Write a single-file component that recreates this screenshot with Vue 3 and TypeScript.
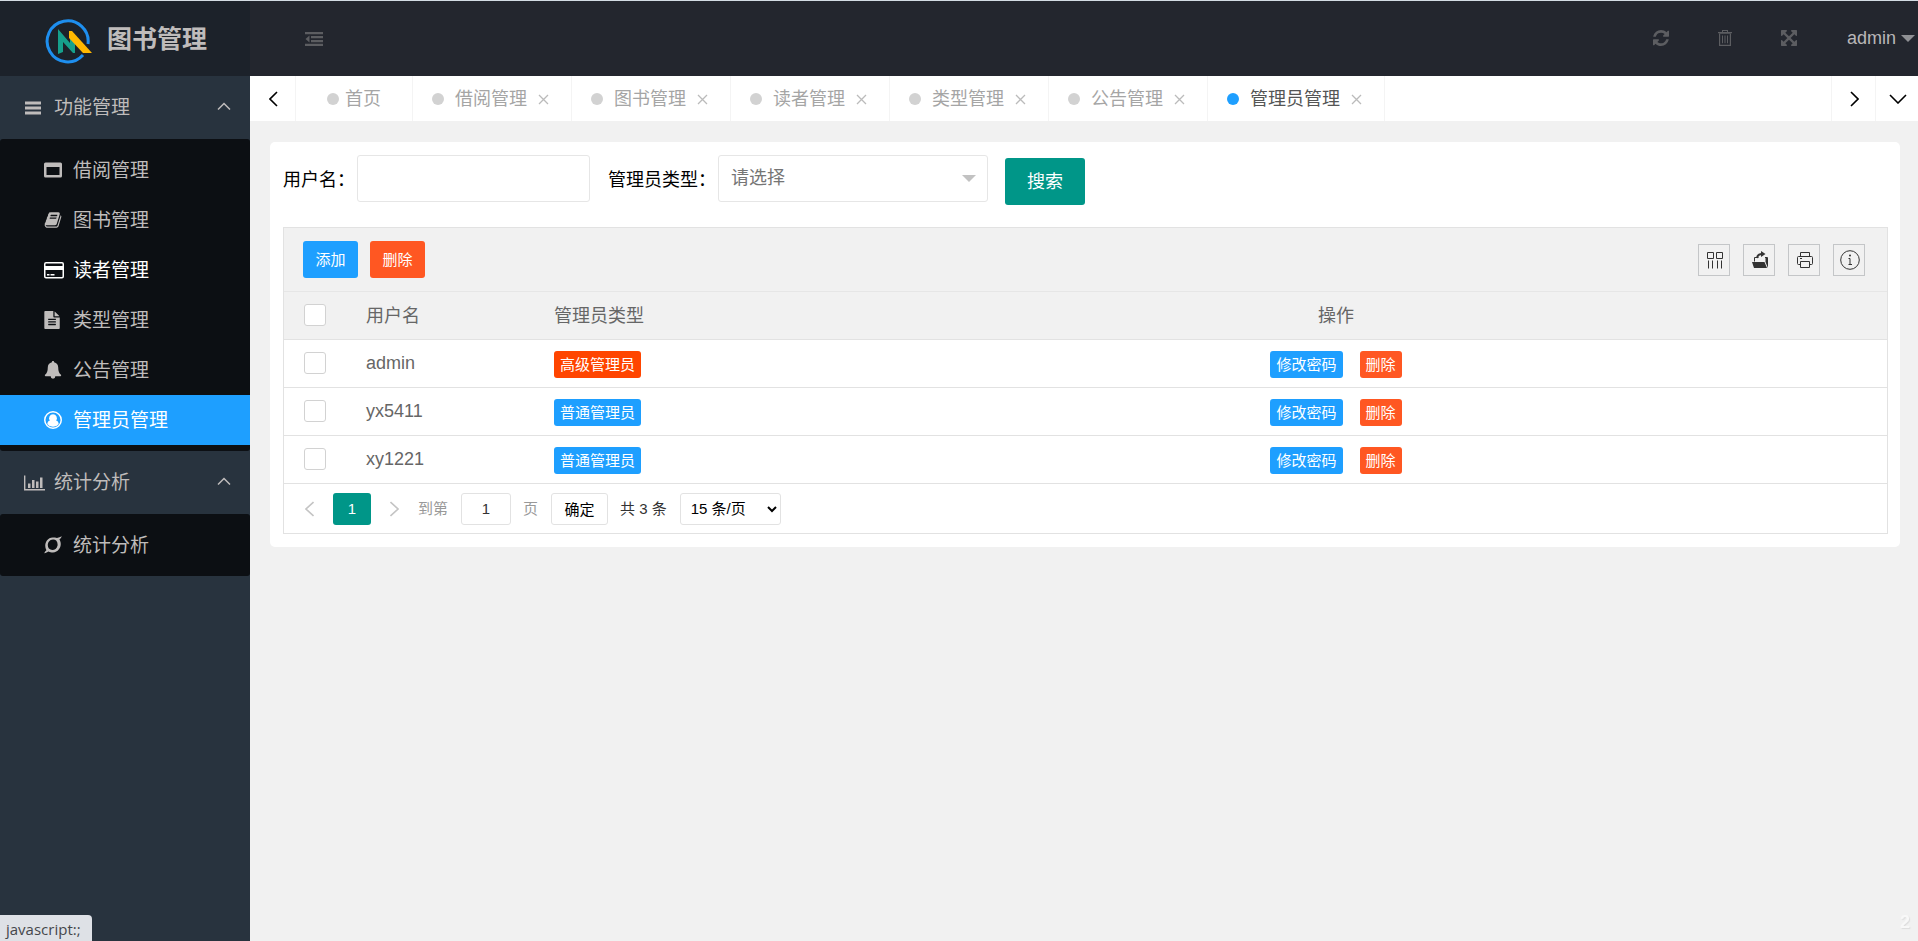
<script setup lang="ts">
import { ref } from 'vue'

interface Glyph { box: string; d: string }
interface MenuItem { label: string; icon: string; active?: boolean; hover?: boolean }
interface MenuGroup { label: string; icon: string; items: MenuItem[] }
interface Admin { name: string; type: string; senior: boolean }

const glyphs: Record<string, Glyph> = {
  bars: { box: '0 0 18 18', d: 'M1 2.500h16v3H1zM1 7.500h16v3H1zM1 12.500h16v3H1z' },
  window: { box: '0 0 18 18', d: 'M1.500 1.500h15a1.500 1.500 0 0 1 1.500 1.500v12a1.500 1.500 0 0 1-1.500 1.500h-15A1.500 1.500 0 0 1 0 15V3a1.500 1.500 0 0 1 1.500-1.500zM2.500 6v8h13V6z' },
  book: { box: '0 0 1792 1792', d: 'M1703 478q40 57 18 129l-275 906q-19 64-76.500 107.500t-122.500 43.500h-923q-77 0-148.500-53.500t-99.500-131.500q-24-67-2-127 0-4 3-27t4-37q1-8-3-21.500t-3-19.500q2-11 8-21t16.500-23.500 16.500-23.500q23-38 45-91.500t30-91.500q3-10 .5-30t-.5-28q3-11 17-28t17-23q21-36 42-92t25-90q1-9-2.500-32t.5-28q4-13 22-30.500t22-22.500q19-26 42.500-84.500t27.500-96.500q1-8-3-25.500t-2-26.500q2-8 9-18t18-23 17-21q8-12 16.500-30.500t15-35 16-36 19.500-32 26.500-23.500 36-11.500 47.500 5.500l-1 3q38-9 51-9h761q74 0 114 56t18 130l-274 906q-36 119-71.500 153.500t-128.500 34.500h-869q-27 0-38 15-11 16-1 43 24 70 144 70h923q29 0 56-15.500t35-41.500l300-987q7-22 5-57 38 15 59 43zm-1064 2q-4 13 2 22.500t20 9.500h608q13 0 25.500-9.500t16.500-22.500l21-64q4-13-2-22.500t-20-9.500h-608q-13 0-25.500 9.500t-16.500 22.500zm-83 256q-4 13 2 22.500t20 9.500h608q13 0 25.500-9.500t16.500-22.500l21-64q4-13-2-22.500t-20-9.500h-608q-13 0-25.500 9.500t-16.500 22.500z' },
  credit: { box: '0 0 20 18', d: 'M2 1h16a2 2 0 0 1 2 2v12.500a2 2 0 0 1-2 2H2a2 2 0 0 1-2-2V3a2 2 0 0 1 2-2zM1.500 3v2h17V3a.5.5 0 0 0-.5-.5H2a.5.5 0 0 0-.5.5zM1.500 9v6.500c0 .3.200.5.500.5h16c.3 0 .5-.2.500-.5V9zM3 13h2.500v1.500H3zM6.500 13h4v1.500h-4z' },
  file: { box: '96 0 1792 1792', d: 'M1596 476q14 14 28 36h-472v-472q22 14 36 28zm-476 164h544v1056q0 40-28 68t-68 28h-1344q-40 0-68-28t-28-68v-1600q0-40 28-68t68-28h800v544q0 40 28 68t68 28zm160 736v-64q0-14-9-23t-23-9h-704q-14 0-23 9t-9 23v64q0 14 9 23t23 9h704q14 0 23-9t9-23zm0-256v-64q0-14-9-23t-23-9h-704q-14 0-23 9t-9 23v64q0 14 9 23t23 9h704q14 0 23-9t9-23zm0-256v-64q0-14-9-23t-23-9h-704q-14 0-23 9t-9 23v64q0 14 9 23t23 9h704q14 0 23-9t9-23z' },
  bell: { box: '0 0 18 18', d: 'M9 0c.7 0 1.200.5 1.100 1.300 2.500.5 4.100 2.500 4.100 5 0 4 .9 6.200 3 7.700 0 .8-.5 1.300-1.200 1.300h-4.700A2.400 2.400 0 0 1 9 17.800a2.400 2.400 0 0 1-2.300-2.500H2c-.7 0-1.200-.5-1.200-1.300 2.100-1.500 3-3.700 3-7.700 0-2.500 1.600-4.500 4.100-5C7.800.5 8.300 0 9 0z' },
  user: { box: '0 0 18 18', d: 'M9 0a9 9 0 1 1 0 18A9 9 0 0 1 9 0zM9 1.500a7.500 7.500 0 1 0 0 15 7.500 7.500 0 0 0 0-15zM9 3.200a3.900 3.900 0 0 1 3 6.400c1.500.2 2.400 1.500 2.700 3.300A7 7 0 0 1 9 15.800a7 7 0 0 1-5.700-2.900c.3-1.800 1.200-3.100 2.700-3.300A3.900 3.900 0 0 1 9 3.200z' },
  chart: { box: '0 0 21 18', d: 'M0 1.500h1.400v13.600H21v1.400H0zM4 9.500h2.500V14H4zM8 6h2.500v8H8zM12 7.500h2.500V14H12zM16 3.500h2.500V14H16z' },
  ring: { box: '0 0 18 18', d: 'M17.800.3c-.6 1.500-1.400 2.500-2.400 3.200 3.200 4.600.6 12.600-6.400 12.900-2 0-3.200-.3-4.500-1-1.200.8-2.500 1.500-4.300 1.900.6-1.300 1.300-2.300 2.200-3C-.4 9.500 1.900 1.900 8.700 1.500c1.700 0 3 .1 4.300.4 1.700-.3 3.200-.8 4.800-1.600zM9 3.600c-5.200.3-6.300 6.200-4.100 9 2.800 2.700 7.800 1.300 8.600-2.900C14.100 6.200 12.200 3.500 9 3.600z' },
  outdent: { box: '0 0 18 14', d: 'M0 0h18v2.200H0zM6 4h12v2.200H6zM6 8h12v2.200H6zM0 11.800h18V14H0zM4.500 3.500v7L.5 7z' },
  refresh: { box: '128 128 1536 1536', d: 'M1639 1056q0 5-1 7-64 268-268 434.500t-478 166.500q-146 0-282.500-55t-243.500-157l-129 129q-19 19-45 19t-45-19-19-45v-448q0-26 19-45t45-19h448q26 0 45 19t19 45-19 45l-137 137q71 66 161 102t187 36q134 0 250-65t186-179q11-17 53-117 8-23 30-23h192q13 0 22.500 9.500t9.500 22.500zm25-800v448q0 26-19 45t-45 19h-448q-26 0-45-19t-19-45 19-45l138-138q-148-137-349-137-134 0-250 65t-186 179q-11 17-53 117-8 23-30 23h-199q-13 0-22.500-9.500t-9.500-22.500v-7q65-268 270-434.500t480-166.500q146 0 284 55.500t245 156.500l130-129q19-19 45-19t45 19 19 45z' },
  trash: { box: '0 0 16 16', d: 'M5 0h6v2h4v1.300H1V2h4zM6 1v1h4V1zM2 3h12v13H2zM3.200 4v10.800h9.600V4zM5 5.500h1v7.800H5zM7.500 5.500h1v7.800h-1zM10 5.500h1v7.800h-1z' },
  expand: { box: '128 128 1536 1536', d: 'M1411 541l-355 355 355 355 144-144q29-31 70-14 39 17 39 59v448q0 26-19 45t-45 19h-448q-42 0-59-40-17-39 14-69l144-144-355-355-355 355 144 144q31 30 14 69-17 40-59 40h-448q-26 0-45-19t-19-45v-448q0-42 40-59 39-17 69 14l144 144 355-355-355-355-144 144q-19 19-45 19-12 0-24-5-40-17-40-59v-448q0-26 19-45t45-19h448q42 0 59 40 17 39-14 69l-144 144 355 355 355-355-144-144q-31-30-14-69 17-40 59-40h448q26 0 45 19t19 45v448q0 42-39 59-13 5-25 5-26 0-45-19z' },
}

const headerTools = [
  { icon: 'refresh', title: '刷新' },
  { icon: 'trash', title: '清理' },
  { icon: 'expand', title: '全屏' },
]

const groups: MenuGroup[] = [
  {
    label: '功能管理',
    icon: 'bars',
    items: [
      { label: '借阅管理', icon: 'window' },
      { label: '图书管理', icon: 'book' },
      { label: '读者管理', icon: 'credit', hover: true },
      { label: '类型管理', icon: 'file' },
      { label: '公告管理', icon: 'bell' },
      { label: '管理员管理', icon: 'user', active: true },
    ],
  },
  { label: '统计分析', icon: 'chart', items: [{ label: '统计分析', icon: 'ring' }] },
]

const tabs = ['借阅管理', '图书管理', '读者管理', '类型管理', '公告管理', '管理员管理']
const currentTab = ref('管理员管理')

const admins: Admin[] = [
  { name: 'admin', type: '高级管理员', senior: true },
  { name: 'yx5411', type: '普通管理员', senior: false },
  { name: 'xy1221', type: '普通管理员', senior: false },
]
const userName = ref('')
const pageNo = ref('1')
</script>

<template>
  <div class="app">
    <aside class="side">
      <h1 class="logo">
        <svg class="logo-mark" viewBox="0 0 48 46" aria-hidden="true">
          <path d="M43 26A20.500 20.500 0 1 0 38 37" fill="none" stroke="#1e8fef" stroke-width="3" />
          <path d="M13 11l12 14v-5l5 5v10h-2L18 24v10l-5 2z" fill="#16a08c" />
          <path d="M24 13h3l20 22h-9L24 20z" fill="#ffb800" />
        </svg>
        <span>图书管理</span>
      </h1>
      <nav>
        <section v-for="g in groups" :key="g.label">
          <button class="group" type="button">
            <svg class="group-icon" :class="g.icon" :viewBox="glyphs[g.icon].box"><path :d="glyphs[g.icon].d" fill-rule="evenodd" /></svg>
            <span>{{ g.label }}</span>
            <svg class="fold" viewBox="0 0 14 8"><path d="M1 7.500l6-6 6 6" /></svg>
          </button>
          <ul class="items">
            <li v-for="i in g.items" :key="i.label">
              <a href="#" class="item" :class="{ active: i.active, hover: i.hover }">
                <svg class="item-icon" :class="i.icon" :viewBox="glyphs[i.icon].box"><path :d="glyphs[i.icon].d" fill-rule="evenodd" /></svg>
                <span>{{ i.label }}</span>
              </a>
            </li>
          </ul>
        </section>
      </nav>
    </aside>

    <div class="main">
      <header class="top">
        <button class="toggle" type="button" aria-label="收起菜单">
          <svg :viewBox="glyphs.outdent.box"><path :d="glyphs.outdent.d" /></svg>
        </button>
        <div class="tools">
          <button v-for="t in headerTools" :key="t.icon" class="tool" type="button" :aria-label="t.title">
            <svg :viewBox="glyphs[t.icon].box"><path :d="glyphs[t.icon].d" fill-rule="evenodd" /></svg>
          </button>
          <button class="account" type="button">admin<i class="caret"></i></button>
        </div>
      </header>

      <div class="tabbar">
        <button class="ctl left" type="button" aria-label="向左">
          <svg class="vert" viewBox="0 0 9 16"><path d="M8 1L1 8l7 7" /></svg>
        </button>
        <div class="tabs">
          <div class="tab home"><i class="dot"></i><a href="#">首页</a></div>
          <div v-for="t in tabs" :key="t" class="tab" :class="{ on: t === currentTab }">
            <i class="dot"></i>
            <a href="#" @click.prevent="currentTab = t">{{ t }}</a>
            <button class="close" type="button" aria-label="关闭"><svg viewBox="0 0 11 11"><path d="M1 1l9 9M10 1l-9 9" /></svg></button>
          </div>
        </div>
        <button class="ctl" type="button" aria-label="向右">
          <svg class="vert" viewBox="0 0 9 16"><path d="M1 1l7 7-7 7" /></svg>
        </button>
        <button class="ctl last" type="button" aria-label="更多">
          <svg class="horiz" viewBox="0 0 18 10"><path d="M1 1l8 8 8-8" /></svg>
        </button>
      </div>

      <main class="card">
        <form class="search" @submit.prevent>
          <label for="user">用户名：</label>
          <input id="user" v-model="userName" type="text">
          <label for="kind">管理员类型：</label>
          <div class="picker">
            <select id="kind">
              <option>请选择</option>
              <option>高级管理员</option>
              <option>普通管理员</option>
            </select>
          </div>
          <button class="go" type="submit">搜索</button>
        </form>

        <div class="grid">
          <div class="bar">
            <button class="act blue" type="button">添加</button>
            <button class="act red" type="button">删除</button>
            <div class="bar-tools">
              <button type="button" aria-label="筛选列">
                <svg viewBox="0 0 18 18"><path class="line" d="M1.500 1.500h6v6h-6zM10.500 1.500h6v6h-6zM2.500 9.500v8M6.500 9.500v8M11.500 9.500v8M15.500 9.500v8" /></svg>
              </button>
              <button type="button" aria-label="导出">
                <svg viewBox="0 0 18 18"><path d="M1 11h12.500l2.500 6H3zM14.500 7H17v10l-2.500-6z" /><path class="line" d="M3.500 10.500v-4h4M14 6.500h2.500v4" /><path class="line" d="M6 7c.5-3 2.500-4 5-4" stroke-width="2" /><path d="M10 0l4.500 3L10 6z" /></svg>
              </button>
              <button type="button" aria-label="打印">
                <svg viewBox="0 0 18 18"><path class="line" d="M4.500 5.500v-4h9v4M4.500 13.500h-2a1 1 0 0 1-1-1v-6a1 1 0 0 1 1-1h13a1 1 0 0 1 1 1v6a1 1 0 0 1-1 1h-2M4.500 10.500h9v6h-9zM4 7.500h2" /></svg>
              </button>
              <button type="button" aria-label="提示">
                <svg class="info" viewBox="0 0 20 20"><circle class="line" cx="10" cy="10" r="9.300" /><path class="line" d="M8.500 8.500H10v6M8.500 14.500h3.500" /><circle cx="10" cy="5.500" r="1" /></svg>
              </button>
            </div>
          </div>

          <table>
            <colgroup><col class="c1"><col class="c2"><col class="c3"><col></colgroup>
            <thead>
              <tr>
                <th><input type="checkbox" aria-label="全选"></th>
                <th>用户名</th>
                <th>管理员类型</th>
                <th class="mid">操作</th>
              </tr>
            </thead>
            <tbody>
              <tr v-for="a in admins" :key="a.name">
                <td><input type="checkbox" :aria-label="a.name"></td>
                <td>{{ a.name }}</td>
                <td><button class="mini" :class="a.senior ? 'orange' : 'blue'" type="button">{{ a.type }}</button></td>
                <td>
                  <div class="ops">
                    <button class="mini blue" type="button">修改密码</button>
                    <button class="mini red" type="button">删除</button>
                  </div>
                </td>
              </tr>
            </tbody>
          </table>

          <div class="pager">
            <button class="turn" type="button" aria-label="上一页"><svg viewBox="0 0 9 16"><path d="M8.500 1L1 8l7.500 7" /></svg></button>
            <button class="page" type="button">1</button>
            <button class="turn" type="button" aria-label="下一页"><svg viewBox="0 0 9 16"><path d="M.5 1L8 8l-7.500 7" /></svg></button>
            <label for="page">到第</label>
            <input id="page" v-model="pageNo" type="text">
            <span class="grey">页</span>
            <button class="ok" type="button">确定</button>
            <span class="total">共 3 条</span>
            <select aria-label="每页条数"><option>15 条/页</option><option>30 条/页</option></select>
          </div>
        </div>
      </main>
    </div>

    <div class="status">javascript:;</div>
    <div class="mark">2</div>
  </div>
</template>

<style>
body { background: #f1f1f1; }
</style>

<style scoped>
* { box-sizing: border-box; }
button, input, select { font: inherit; margin: 0; padding: 0; border: 0; background: none; color: inherit; border-radius: 0; }
button { cursor: pointer; }
a { color: inherit; text-decoration: none; }
svg { display: block; fill: currentColor; }
ul { list-style: none; margin: 0; padding: 0; }

.app {
  display: flex;
  min-height: 100vh;
  border-top: 1px solid #d3dce3;
  font-family: "Liberation Sans", "Noto Sans CJK SC", sans-serif;
  font-size: 18px;
  color: #000;
}

/* sidebar */
.side { flex: none; width: 250px; background: #28333e; color: #bfbcbb; font-size: 19px; }
.logo {
  display: flex; align-items: center; gap: 14px;
  height: 75px; margin: 0; padding-left: 45px;
  background: #1c222a; font-size: 25px; line-height: 36px; font-weight: 700;
}
.logo-mark { width: 48px; height: 46px; margin-top: 4px; }
.group { display: flex; align-items: center; width: 100%; height: 63px; padding: 0 19px 0 24px; text-align: left; }
.group span { flex: 1; padding-bottom: 4px; }
.group-icon { width: 18px; height: 18px; margin-right: 12px; }
.group-icon.chart { width: 21px; margin-right: 9px; }
.fold { width: 14px; height: 8px; margin-bottom: 4px; fill: none; stroke: currentColor; stroke-width: 1.500; }
.items { padding: 6px 0; background: #0c0f13; border-radius: 3px; }
.item { display: flex; align-items: center; gap: 11px; height: 50px; padding-left: 44px; }
.item span { padding-bottom: 4px; }
.item-icon { width: 18px; height: 18px; }
.item-icon.credit { width: 20px; margin-right: -2px; }
.item.hover { color: #fff; }
.item.active { background: #1e9fff; color: #fff; }

/* header */
.main { flex: 1; min-width: 0; }
.top { display: flex; align-items: center; justify-content: space-between; height: 75px; padding-left: 55px; background: #23262e; color: #5c5d61; }
.toggle svg { width: 18px; height: 14px; }
.tools { display: flex; align-items: center; }
.tool { width: 64px; height: 75px; padding-bottom: 2px; display: flex; align-items: center; justify-content: center; }
.tool svg { width: 16px; height: 16px; }
.account { display: flex; align-items: center; gap: 5px; margin-left: 26px; padding-right: 3px; color: #b9b6b8; }
.caret { border: 7px solid transparent; border-top-color: #8f9094; border-bottom-width: 0; }

/* tab strip */
.tabbar { display: flex; height: 45px; background: #fff; }
.ctl { flex: none; display: flex; align-items: center; justify-content: center; width: 44px; padding-left: 2px; border-left: 1px solid #f4f4f4; }
.ctl.left { width: 46px; border-left: 0; border-right: 1px solid #f4f4f4; }
.ctl.last { width: 43px; }
.ctl svg, .close svg, .turn svg { fill: none; stroke: currentColor; }
.ctl svg { stroke-width: 1.600; }
.vert { width: 9px; height: 16px; }
.horiz { width: 18px; height: 10px; }
.tabs { display: flex; flex: 1; min-width: 0; overflow: hidden; color: #a5a5a5; }
.tab { display: flex; align-items: center; gap: 11px; padding: 0 22px 0 19px; border-right: 1px solid #f4f4f4; white-space: nowrap; }
.tab.home { gap: 6px; padding: 0 31px; }
.tab.on { color: #555; }
.tab a { padding-bottom: 4px; }
.dot { width: 12px; height: 12px; border-radius: 50%; background: #d2d2d2; }
.on .dot { background: #1e9fff; }
.close { padding-top: 2px; color: #bbb; }
.close svg { width: 11px; height: 11px; stroke-width: 1.300; }

/* content card */
.card { margin: 21px 18px 0 20px; padding: 13px 12px 13px 13px; background: #fff; border-radius: 5px; }
.search { display: flex; align-items: flex-start; padding-bottom: 22px; }
.search label { line-height: 50px; }
.search input { width: 233px; height: 47px; margin: 0 18px 0 2px; padding: 0 13px; border: 1px solid #e6e6e6; border-radius: 3px; }
.picker { position: relative; width: 270px; margin-left: 2px; }
.picker select { width: 100%; height: 47px; padding: 0 12px 2px; border: 1px solid #e6e6e6; border-radius: 3px; appearance: none; background: #fff; color: #757575; }
.picker::after { content: ""; position: absolute; right: 12px; top: 20px; border: 7px solid transparent; border-top-color: #c2c2c2; border-bottom-width: 0; pointer-events: none; }
.go { width: 80px; height: 47px; margin: 3px 0 0 17px; padding-bottom: 4px; border-radius: 3px; background: #009688; color: #fff; }

.grid { border: 1px solid #e2e2e2; color: #666; }
.bar { display: flex; align-items: center; gap: 12px; height: 64px; padding: 0 22px 0 19px; background: #f1f1f1; border-bottom: 1px solid #e6e6e6; }
.act { width: 55px; height: 37px; padding-bottom: 2px; border-radius: 3px; font-size: 15px; color: #fff; }
.blue { background: #1e9fff; }
.red { background: #ff5722; }
.orange { background: #ff4500; }
.bar-tools { display: flex; gap: 13px; margin-left: auto; color: #333; }
.bar-tools button { display: flex; align-items: center; justify-content: center; width: 32px; height: 32px; padding-left: 2px; border: 1px solid #c4c6c8; }
.bar-tools svg { width: 18px; height: 18px; }
.bar-tools .info { width: 20px; height: 20px; }
.line { fill: none; stroke: currentColor; }

table { width: 100%; table-layout: fixed; border-collapse: separate; border-spacing: 0; }
.c1 { width: 62px; }
.c2 { width: 188px; }
.c3 { width: 251px; }
th, td { height: 48px; padding: 0 20px; border-bottom: 1px solid #e2e2e2; font-weight: 400; text-align: left; }
th { padding-bottom: 4px; background: #f1f1f1; }
.mid { text-align: center; }
input[type="checkbox"] { display: block; width: 22px; height: 22px; margin-bottom: 2px; border: 1px solid #d2d2d2; border-radius: 3px; background: #fff; appearance: none; }
th input[type="checkbox"] { margin: 2px 0 0; }
.mini { display: block; height: 27px; padding: 0 6px; border-radius: 3px; font-size: 15px; line-height: 27px; color: #fff; }
td .mini { margin-top: 2px; }
.ops { display: flex; justify-content: center; gap: 17px; }

.pager { display: flex; align-items: center; height: 49px; padding-left: 21px; font-size: 15px; color: #333; }
.turn { color: #c4c4c4; }
.turn svg { width: 9px; height: 16px; stroke-width: 1.600; }
.page { width: 38px; height: 32px; margin: 0 19px; border-radius: 3px; background: #009688; color: #fff; }
.pager label { margin: 0 13px 0 19px; padding-bottom: 2px; color: #999; }
.pager input { width: 50px; height: 32px; border: 1px solid #e2e2e2; border-radius: 3px; text-align: center; }
.grey { margin: 0 13px 0 12px; padding-bottom: 2px; color: #999; }
.ok { width: 57px; height: 32px; border: 1px solid #e2e2e2; border-radius: 3px; color: #000; }
.total { margin: 0 13px 0 12px; padding-bottom: 2px; }
.pager select { width: 101px; height: 32px; padding: 0 6px; border: 1px solid #e2e2e2; border-radius: 3px; color: #000; }

/* overlays */
.status { position: fixed; left: 0; bottom: 0; height: 26px; padding: 0 11px 0 6px; border-radius: 0 4px 0 0; background: #dee1e6; color: #45474b; font: 15px/28px "Open Sans", sans-serif; }
.mark { position: fixed; right: 8px; bottom: 8px; color: #f8f8f8; font-size: 18px; font-weight: 700; text-shadow: 1px 1px 1px #ddd; }
</style>
